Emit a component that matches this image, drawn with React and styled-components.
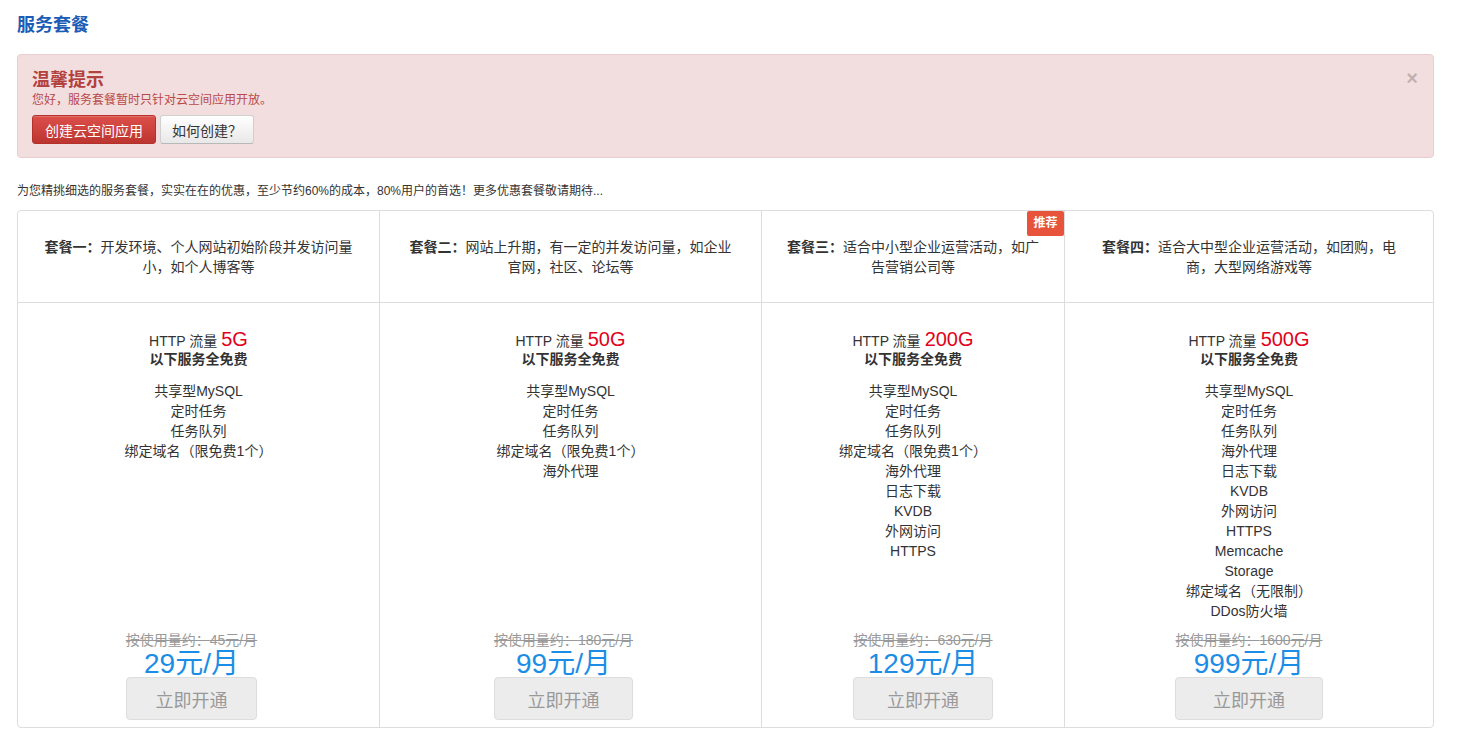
import React from 'react';
import styled, { createGlobalStyle } from 'styled-components';

const plans = [
  {
    name: '套餐一',
    desc: '开发环境、个人网站初始阶段并发访问量小，如个人博客等',
    traffic: '5G',
    services: ['共享型MySQL', '定时任务', '任务队列', '绑定域名（限免费1个）'],
    original: '45',
    price: '29',
    width: '362px',
    pad: 24,
    shift: -7,
  },
  {
    name: '套餐二',
    desc: '网站上升期，有一定的并发访问量，如企业官网，社区、论坛等',
    traffic: '50G',
    services: ['共享型MySQL', '定时任务', '任务队列', '绑定域名（限免费1个）', '海外代理'],
    original: '180',
    price: '99',
    width: '382px',
    pad: 26,
    shift: -7,
  },
  {
    name: '套餐三',
    desc: '适合中小型企业运营活动，如广告营销公司等',
    traffic: '200G',
    services: [
      '共享型MySQL', '定时任务', '任务队列', '绑定域名（限免费1个）', '海外代理',
      '日志下载', 'KVDB', '外网访问', 'HTTPS',
    ],
    original: '630',
    price: '129',
    width: '303px',
    pad: 24,
    shift: 10,
    recommended: true,
  },
  {
    name: '套餐四',
    desc: '适合大中型企业运营活动，如团购，电商，大型网络游戏等',
    traffic: '500G',
    services: [
      '共享型MySQL', '定时任务', '任务队列', '海外代理', '日志下载', 'KVDB', '外网访问',
      'HTTPS', 'Memcache', 'Storage', '绑定域名（无限制）', 'DDos防火墙',
    ],
    original: '1600',
    price: '999',
    width: '1fr',
    pad: 34,
    shift: 0,
  },
];

const App = () => (
  <>
    <GlobalStyle />
    <Page>
      <Title>服务套餐</Title>
      <Alert>
        <CloseButton>×</CloseButton>
        <AlertTitle>温馨提示</AlertTitle>
        <AlertText>您好，服务套餐暂时只针对云空间应用开放。</AlertText>
        <AlertActions>
          <DangerButton>创建云空间应用</DangerButton>
          <DefaultButton>如何创建？</DefaultButton>
        </AlertActions>
      </Alert>
      <Intro>为您精挑细选的服务套餐，实实在在的优惠，至少节约60%的成本，80%用户的首选！更多优惠套餐敬请期待...</Intro>
      <PlanTable columns={plans.map(p => p.width).join(' ')}>
        {plans.map((plan, i) => (
          <HeadCell key={`h-${plan.name}`} pad={plan.pad} last={i === plans.length - 1}>
            {plan.recommended && <Badge>推荐</Badge>}
            <HeadText><strong>{plan.name}：</strong>{plan.desc}</HeadText>
          </HeadCell>
        ))}
        {plans.map((plan, i) => (
          <BodyCell key={`b-${plan.name}`} last={i === plans.length - 1}>
            <Traffic>HTTP 流量 <TrafficValue>{plan.traffic}</TrafficValue></Traffic>
            <FreeLabel>以下服务全免费</FreeLabel>
            <ServiceList>
              {plan.services.map(s => <li key={s}>{s}</li>)}
            </ServiceList>
            <PriceBox shift={plan.shift}>
              <OldPrice>按使用量约：{plan.original}元/月</OldPrice>
              <Price>{plan.price}元/月</Price>
              <OpenButton>立即开通</OpenButton>
            </PriceBox>
          </BodyCell>
        ))}
      </PlanTable>
    </Page>
  </>
);

export default App;

const GlobalStyle = createGlobalStyle`
  html, body {
    margin: 0;
    padding: 0;
    background: #fff;
  }
  body {
    font-family: "Liberation Sans", "Noto Sans CJK SC", sans-serif;
    font-size: 14px;
    color: #333;
  }
`;

const Page = styled.div`
  width: 1417px;
  padding: 0 0 19px 17px;
`;

const Title = styled.h2`
  margin: 0;
  padding-top: 13px;
  font-size: 18px;
  line-height: 24px;
  font-weight: bold;
  color: #1a5cb6;
`;

const Alert = styled.div`
  position: relative;
  margin-top: 17px;
  padding: 14px 14px 13px;
  background: #f2dede;
  border: 1px solid #ebccd1;
  border-radius: 4px;
  color: #b94a48;
`;

const CloseButton = styled.span`
  position: absolute;
  top: 13px;
  right: 15px;
  font-size: 20px;
  line-height: 20px;
  font-weight: bold;
  color: #000;
  opacity: 0.2;
  cursor: pointer;
`;

const AlertTitle = styled.h4`
  margin: 0;
  font-size: 18px;
  line-height: 22px;
  font-weight: bold;
  color: #b3413e;
`;

const AlertText = styled.p`
  margin: 0;
  font-size: 12px;
  line-height: 18px;
`;

const AlertActions = styled.div`
  display: flex;
  gap: 4px;
  margin-top: 6px;
`;

const DangerButton = styled.button`
  height: 29px;
  padding: 0 12px;
  font: inherit;
  font-size: 14px;
  color: #fff;
  background: linear-gradient(#dc4f4a, #bd3530);
  border: 1px solid #b3302b;
  border-radius: 3px;
  box-shadow: inset 0 1px 0 rgba(255, 255, 255, 0.2);
`;

const DefaultButton = styled.button`
  height: 29px;
  padding: 0 11px;
  font: inherit;
  font-size: 14px;
  color: #333;
  background: linear-gradient(#fff, #e8e8e8);
  border: 1px solid #d0d0d0;
  border-bottom-color: #b8b8b8;
  border-radius: 3px;
`;

const Intro = styled.p`
  margin: 24px 0 0;
  font-size: 12px;
  line-height: 18px;
  color: #333;
`;

const PlanTable = styled.div`
  display: grid;
  grid-template-columns: ${props => props.columns};
  margin-top: 10px;
  border: 1px solid #ddd;
  border-radius: 4px;
`;

const HeadCell = styled.div`
  position: relative;
  display: flex;
  align-items: center;
  justify-content: center;
  height: 91px;
  padding: 0 ${props => props.pad}px;
  border-bottom: 1px solid #ddd;
  border-right: ${props => props.last ? 'none' : '1px solid #ddd'};
`;

const HeadText = styled.div`
  text-align: center;
  font-size: 14px;
  line-height: 20px;
  color: #333;

  strong {
    font-weight: bold;
  }
`;

const Badge = styled.span`
  position: absolute;
  top: 0;
  right: 0;
  width: 37px;
  height: 25px;
  line-height: 25px;
  text-align: center;
  font-size: 12px;
  font-weight: bold;
  color: #fff;
  background: #e8533b;
  border-radius: 2px;
`;

const BodyCell = styled.div`
  display: flex;
  flex-direction: column;
  align-items: center;
  padding: 26px 10px 7px;
  border-right: ${props => props.last ? 'none' : '1px solid #ddd'};
  text-align: center;
`;

const Traffic = styled.div`
  display: flex;
  align-items: baseline;
  gap: 4px;
  height: 20px;
  line-height: 20px;
  font-size: 14px;
`;

const TrafficValue = styled.span`
  font-size: 20px;
  color: #e3001b;
`;

const FreeLabel = styled.div`
  font-size: 14px;
  line-height: 20px;
  font-weight: bold;
`;

const ServiceList = styled.ul`
  list-style: none;
  margin: 12px 0 0;
  padding: 0;
  font-size: 14px;
  line-height: 20px;
`;

const PriceBox = styled.div`
  display: flex;
  flex-direction: column;
  align-items: stretch;
  margin-top: auto;
  margin-left: ${props => props.shift * 2}px;
  padding-top: 9px;
`;

const OldPrice = styled.div`
  font-size: 14px;
  line-height: 20px;
  color: #999;
  text-decoration: line-through;
  white-space: nowrap;
`;

const Price = styled.div`
  font-size: 28px;
  line-height: 27px;
  color: #1c8de6;
  white-space: nowrap;
`;

const OpenButton = styled.button`
  height: 43px;
  font: inherit;
  font-size: 18px;
  color: #999;
  background: #ececec;
  border: 1px solid #ddd;
  border-radius: 4px;
`;
